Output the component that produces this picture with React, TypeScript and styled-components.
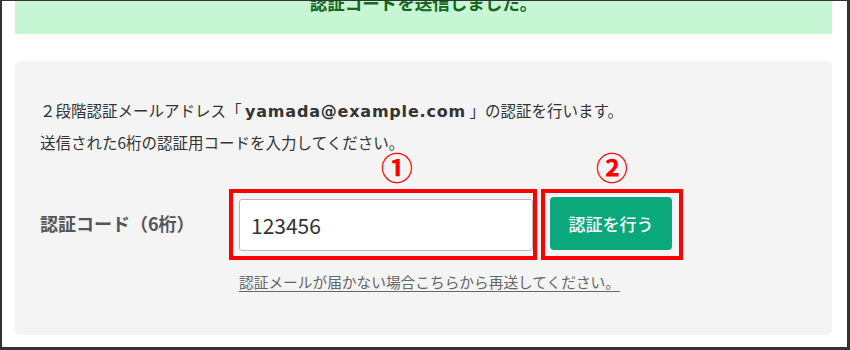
import React from "react";
import styled, { createGlobalStyle } from "styled-components";

const Global = createGlobalStyle`
  html, body {
    margin: 0;
    padding: 0;
    background: #333;
  }
  body {
    font-family: "Noto Sans CJK JP", "Noto Sans", sans-serif;
  }
`;

const Frame = styled.div`
  width: 850px;
  height: 350px;
  box-sizing: border-box;
  border-style: solid;
  border-color: #333;
  border-width: 1px 3px 3px 2px;
  background: #fff;
  overflow: hidden;
  padding: 0 15px 0 13px;
`;

const Banner = styled.div`
  margin-top: -31px;
  height: 64px;
  background: #c6f6d3;
  display: flex;
  align-items: center;
  justify-content: center;
  font-weight: 700;
  font-size: 17.5px;
  color: #17661f;
`;

const Panel = styled.section`
  margin-top: 27px;
  height: 274px;
  box-sizing: border-box;
  background: #f4f4f4;
  border-radius: 5px;
  padding: 34px 0 0 25px;
`;

const Intro = styled.p`
  margin: 0;
  font-size: 15.5px;
  line-height: 30px;
  color: #333;
`;

const Email = styled.span`
  font-family: "DejaVu Sans", "Noto Sans", sans-serif;
  font-weight: 700;
  font-size: 16px;
  letter-spacing: 0.8px;
`;

const FormRow = styled.div`
  display: flex;
  align-items: center;
  margin-top: 32px;
`;

const Label = styled.div`
  width: 189px;
  font-size: 18px;
  line-height: 24px;
  margin-top: -4px;
  font-weight: 700;
  color: #555;
`;

const Controls = styled.div`
  display: flex;
  gap: 4px;
`;

const Annot = styled.div<{ $pad: string }>`
  position: relative;
  border: 4px solid #f00;
  padding: ${(p) => p.$pad};
  display: flex;
`;

const Marker = styled.span<{ $shift: number }>`
  position: absolute;
  bottom: calc(100% + 14px);
  left: 50%;
  transform: translateX(calc(-50% + ${(p) => p.$shift}px));
  font-size: 32px;
  line-height: 26px;
  font-weight: 700;
  color: #f00;
`;

const CodeInput = styled.input`
  width: 294px;
  height: 52px;
  box-sizing: border-box;
  border: 1px solid #b8b8b8;
  border-radius: 3px;
  background: #fff;
  padding: 0 0 0 11px;
  margin: 0;
  font-family: "Noto Sans CJK JP", "Noto Sans", sans-serif;
  font-size: 21px;
  color: #333;
  outline: none;
`;

const SubmitButton = styled.button`
  width: 122px;
  height: 53px;
  border: none;
  border-radius: 4px;
  background: #0ba87b;
  color: #fff;
  font-family: "Noto Sans CJK JP", "Noto Sans", sans-serif;
  font-size: 17px;
  font-weight: 500;
  padding: 0;
  margin: 0;
  cursor: pointer;
`;

const ResendLink = styled.a`
  display: inline-block;
  margin: 11px 0 0 199px;
  font-size: 14.7px;
  line-height: 22px;
  color: #666;
  text-decoration: underline;
  text-underline-offset: 3px;
  cursor: pointer;
`;

export default function App() {
  return (
    <>
      <Global />
      <Frame>
        <Banner>認証コードを送信しました。</Banner>
        <Panel>
          <Intro>
            ２段階認証メールアドレス「 <Email>yamada@example.com</Email> 」の認証を行います。
            <br />
            送信された6桁の認証用コードを入力してください。
          </Intro>
          <FormRow>
            <Label>認証コード（6桁）</Label>
            <Controls>
              <Annot $pad="6px 0 5px 6px">
                <Marker $shift={14}>①</Marker>
                <CodeInput defaultValue="123456" readOnly />
              </Annot>
              <Annot $pad="4px 7px 6px 5px">
                <Marker $shift={0}>②</Marker>
                <SubmitButton type="button">認証を行う</SubmitButton>
              </Annot>
            </Controls>
          </FormRow>
          <ResendLink>認証メールが届かない場合こちらから再送してください。</ResendLink>
        </Panel>
      </Frame>
    </>
  );
}
